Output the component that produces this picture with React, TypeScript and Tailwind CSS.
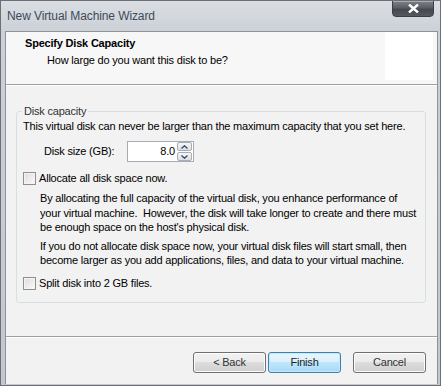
export default function App() {
  const font = { fontFamily: '"Liberation Sans", Arial, sans-serif' };
  return (
    <div
      className="w-[441px] h-[386px] flex flex-col bg-[linear-gradient(180deg,#dadee3_0px,#ccd1d7_30px,#c3c8ce_100%)] border border-[#6b7078] text-[11px] tracking-[-0.2px] text-black overflow-hidden"
      style={font}
    >
      {/* Title bar */}
      <div className="h-[30px] flex items-start justify-between pl-[6px] pr-[6px] shrink-0">
        <span className="mt-[8px] text-[12px] leading-[14px] tracking-[-0.1px] text-[#3d4b5a]">New Virtual Machine Wizard</span>
        <div className="w-[42px] h-[17px] -mt-px rounded-b-[4px] border border-[#3b3f45] bg-[linear-gradient(180deg,#7d8289_0%,#5a5f66_45%,#45494f_55%,#55595f_100%)] shadow-[inset_0_1px_0_rgba(255,255,255,0.35)] flex items-center justify-center">
          <svg width="11" height="9" viewBox="0 0 11 9">
            <path d="M1 0.5 L10 8.5 M10 0.5 L1 8.5" stroke="#ffffff" strokeWidth="2.4" strokeLinecap="butt" />
          </svg>
        </div>
      </div>

      {/* Client area */}
      <div className="flex-1 ml-[4px] mr-[2px] mb-[1px] border-l border-t border-r border-[#8e939a] bg-[#f2f2f2] flex flex-col">
        {/* Header */}
        <div className="h-[53px] shrink-0 bg-[#f7f7f7] border-b border-[#a0a0a0] flex justify-between">
          <div className="pt-[5px]">
            <div className="pl-[19px] font-bold leading-[13px]">Specify Disk Capacity</div>
            <div className="pl-[41px] mt-[4px] leading-[13px]">How large do you want this disk to be?</div>
          </div>
          <div className="w-[48px] h-[48px] bg-white mr-[4px]" />
        </div>
        <div className="h-px bg-white shrink-0" />

        {/* Body */}
        <div className="flex-1 flex flex-col">
          <div className="mt-[25px] ml-[10px] mr-[11px] relative border border-[#d5dfe5] rounded-[3px] h-[192px] pt-[8px] pl-[6px]">
            <span className="absolute -top-[7px] left-[5px] px-[2px] bg-[#f2f2f2] text-[#333333] leading-[13px]">Disk capacity</span>
            <div className="leading-[13px]">This virtual disk can never be larger than the maximum capacity that you set here.</div>
            <div className="flex items-center mt-[8px] pl-[21px]">
              <span className="w-[83px] leading-[13px]">Disk size (GB):</span>
              <div className="w-[67px] h-[21px] border border-[#a5acb5] bg-white flex items-center justify-end pr-[1px]">
                <span className="mr-[2px] leading-[13px]">8.0</span>
                <div className="flex flex-col gap-px">
                  <div className="w-[15px] h-[9px] border border-[#a8adb4] rounded-[2px] bg-[linear-gradient(180deg,#f6f6f6,#dedede)] flex items-center justify-center">
                    <svg width="7" height="4" viewBox="0 0 7 4"><path d="M0.5 3.5 L3.5 0.8 L6.5 3.5" fill="none" stroke="#2c4a7a" strokeWidth="1.3" /></svg>
                  </div>
                  <div className="w-[15px] h-[9px] border border-[#a8adb4] rounded-[2px] bg-[linear-gradient(180deg,#f6f6f6,#dedede)] flex items-center justify-center">
                    <svg width="7" height="4" viewBox="0 0 7 4"><path d="M0.5 0.5 L3.5 3.2 L6.5 0.5" fill="none" stroke="#2c4a7a" strokeWidth="1.3" /></svg>
                  </div>
                </div>
              </div>
            </div>

            <div className="flex items-center mt-[10px]">
              <div className="w-[13px] h-[13px] border border-[#8f8f8f] bg-[linear-gradient(135deg,#dcdcdc,#fbfbfb)] shadow-[inset_0_0_0_1px_#f4f4f4]" />
              <span className="ml-[3px] leading-[13px]">Allocate all disk space now.</span>
            </div>
            <div className="pl-[17px] mt-[6px] leading-[14.5px] whitespace-nowrap">
              By allocating the full capacity of the virtual disk, you enhance performance of
              <br />
              your virtual machine.&nbsp; However, the disk will take longer to create and there must
              <br />
              be enough space on the host's physical disk.
            </div>
            <div className="pl-[17px] mt-[4px] leading-[14.5px] whitespace-nowrap">
              If you do not allocate disk space now, your virtual disk files will start small, then
              <br />
              become larger as you add applications, files, and data to your virtual machine.
            </div>
            <div className="flex items-center mt-[9px]">
              <div className="w-[13px] h-[13px] border border-[#8f8f8f] bg-[linear-gradient(135deg,#dcdcdc,#fbfbfb)] shadow-[inset_0_0_0_1px_#f4f4f4]" />
              <span className="ml-[3px] leading-[13px]">Split disk into 2 GB files.</span>
            </div>
          </div>

          <div className="flex-1" />
          <div className="h-px bg-[#a0a0a0]" />
          <div className="h-px bg-white" />
          <div className="h-[46px] flex items-start justify-end pr-[11px] pt-[14px]">
            <button className="w-[73px] h-[21px] rounded-[3px] border border-[#707070] bg-[linear-gradient(180deg,#f2f2f2_0%,#ebebeb_45%,#dddddd_50%,#cfcfcf_100%)] shadow-[inset_0_0_0_1px_#fcfcfc] text-[#333] leading-[13px]">
              &lt; Back
            </button>
            <button className="ml-[2px] w-[73px] h-[21px] rounded-[3px] border border-[#3c7fb1] bg-[linear-gradient(180deg,#eaf6fd_0%,#d9f0fc_45%,#bee6fd_50%,#a7d9f5_100%)] shadow-[inset_0_0_0_1px_#c5e8fb] text-[#222] leading-[13px]">
              Finish
            </button>
            <button className="ml-[12px] w-[73px] h-[21px] rounded-[3px] border border-[#707070] bg-[linear-gradient(180deg,#f2f2f2_0%,#ebebeb_45%,#dddddd_50%,#cfcfcf_100%)] shadow-[inset_0_0_0_1px_#fcfcfc] text-[#333] leading-[13px]">
              Cancel
            </button>
          </div>
        </div>
      </div>
    </div>
  );
}
